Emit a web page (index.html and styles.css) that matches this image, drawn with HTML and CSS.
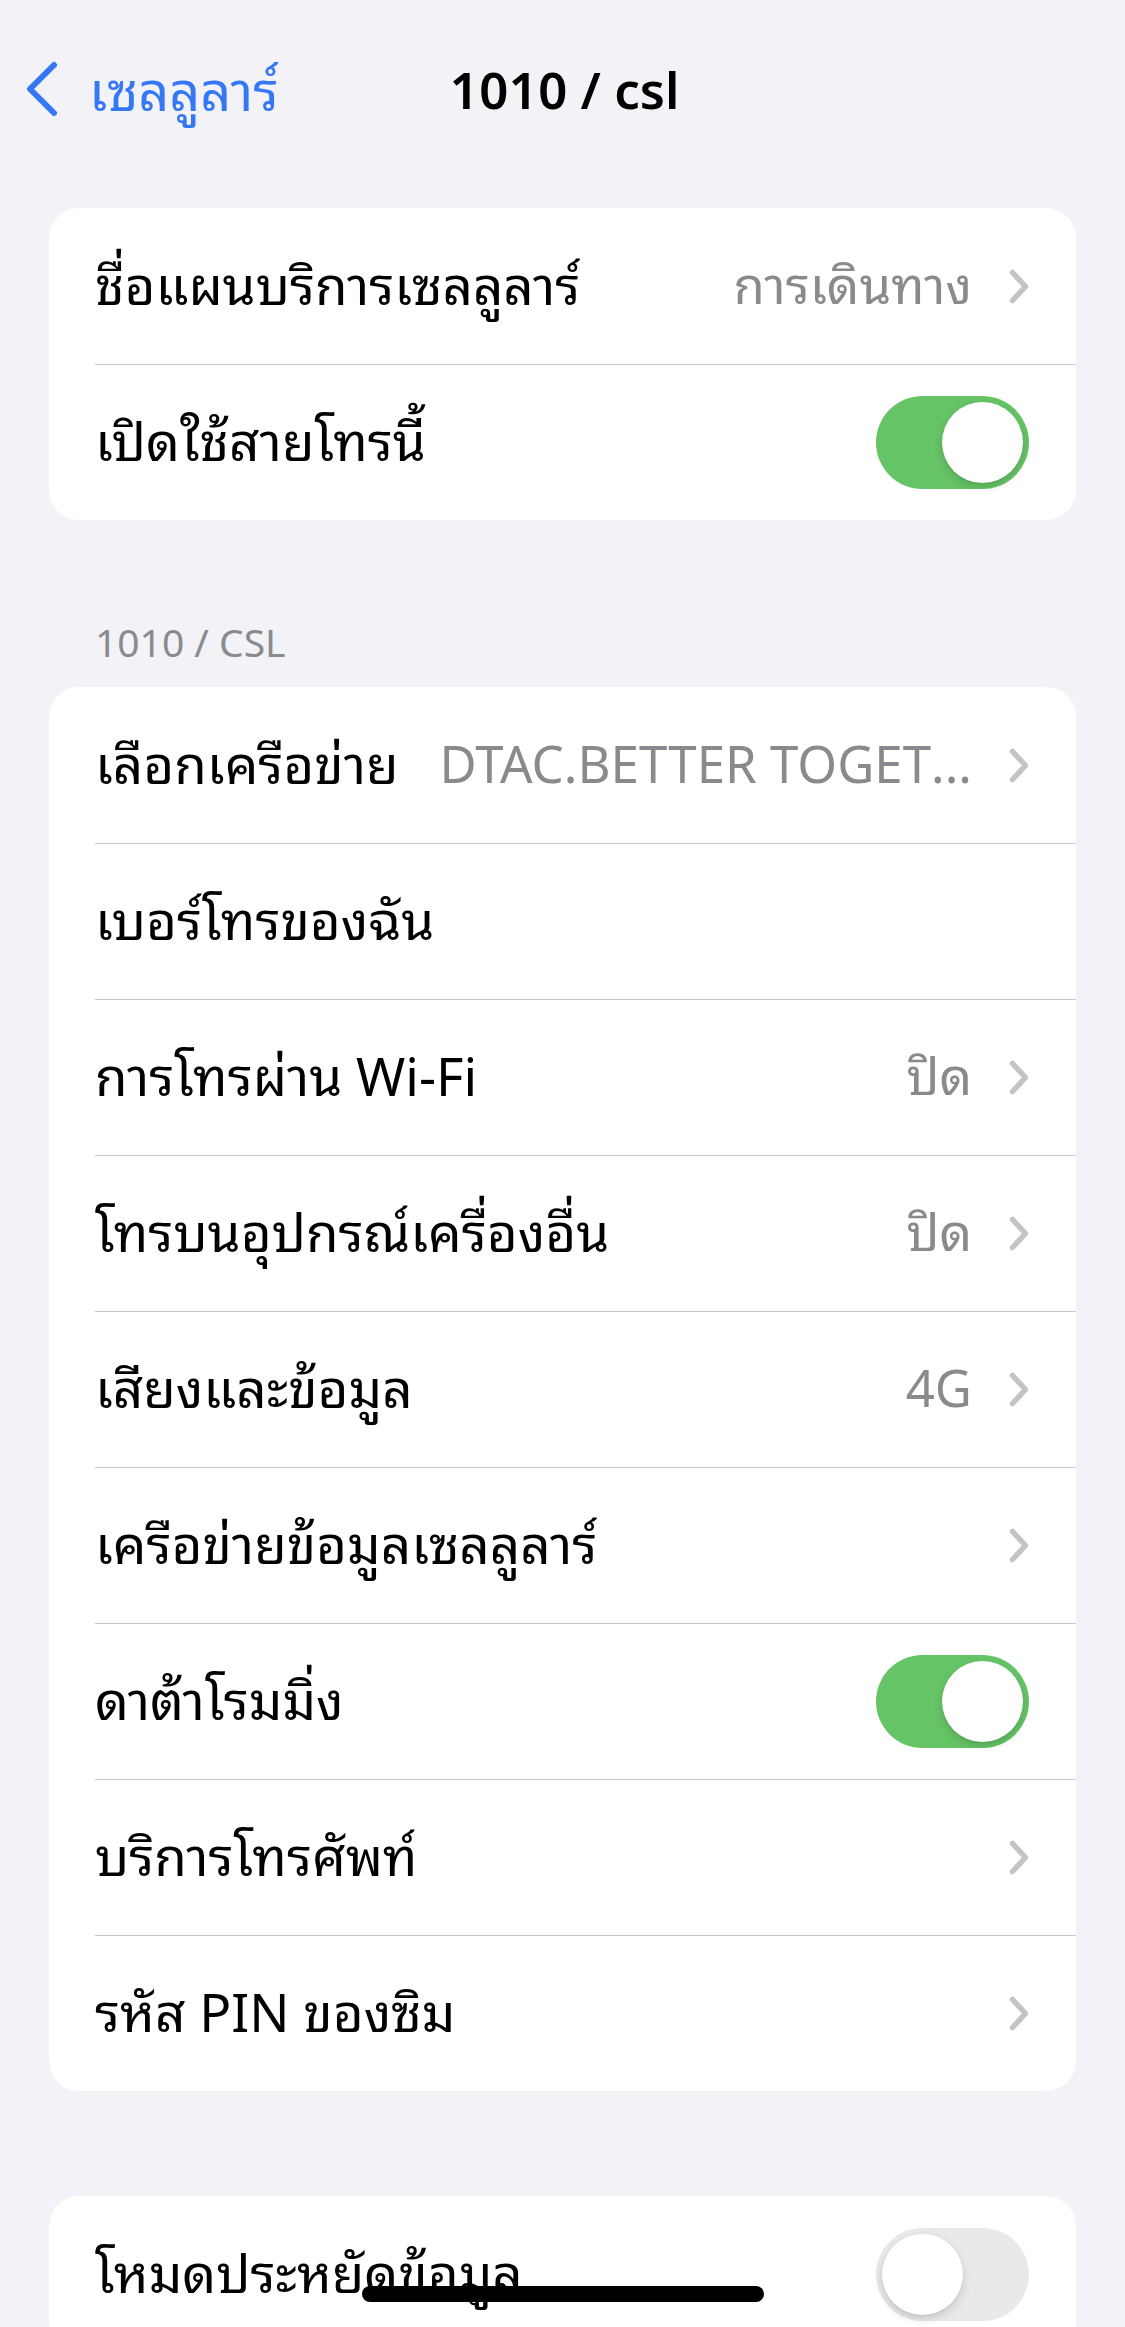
FILE: index.html
```html
<!DOCTYPE html>
<html lang="th">
<head>
    <meta charset="UTF-8">
    <title>1010 / csl</title>
    <link rel="stylesheet" href="styles.css">
</head>
<body>
<div class="screen">
    <div class="nav">
        <a class="back" href="#">
            <svg class="back-icon" viewBox="0 0 34 56" width="34" height="56">
                <path d="M29 4 L5 28 L29 52" fill="none" stroke="#3478f6" stroke-width="6" stroke-linecap="round" stroke-linejoin="round"/>
            </svg>
            <span>เซลลูลาร์</span>
        </a>
        <div class="title">1010 / csl</div>
    </div>

    <div class="group first">
        <div class="row">
            <span class="label">ชื่อแผนบริการเซลลูลาร์</span>
            <span class="value">การเดินทาง</span>
            <span class="chevron"></span>
        </div>
        <div class="row">
            <span class="label">เปิดใช้สายโทรนี้</span>
            <span class="switch on"><span class="knob"></span></span>
        </div>
    </div>

    <div class="section-title">1010 / CSL</div>
    <div class="group">
        <div class="row">
            <span class="label">เลือกเครือข่าย</span>
            <span class="value">DTAC.BETTER TOGET...</span>
            <span class="chevron"></span>
        </div>
        <div class="row">
            <span class="label">เบอร์โทรของฉัน</span>
        </div>
        <div class="row">
            <span class="label">การโทรผ่าน Wi-Fi</span>
            <span class="value">ปิด</span>
            <span class="chevron"></span>
        </div>
        <div class="row">
            <span class="label">โทรบนอุปกรณ์เครื่องอื่น</span>
            <span class="value">ปิด</span>
            <span class="chevron"></span>
        </div>
        <div class="row">
            <span class="label">เสียงและข้อมูล</span>
            <span class="value">4G</span>
            <span class="chevron"></span>
        </div>
        <div class="row">
            <span class="label">เครือข่ายข้อมูลเซลลูลาร์</span>
            <span class="value"></span>
            <span class="chevron"></span>
        </div>
        <div class="row">
            <span class="label">ดาต้าโรมมิ่ง</span>
            <span class="switch on"><span class="knob"></span></span>
        </div>
        <div class="row">
            <span class="label">บริการโทรศัพท์</span>
            <span class="value"></span>
            <span class="chevron"></span>
        </div>
        <div class="row">
            <span class="label">รหัส PIN ของซิม</span>
            <span class="value"></span>
            <span class="chevron"></span>
        </div>
    </div>

    <div class="group last">
        <div class="row">
            <span class="label">โหมดประหยัดข้อมูล</span>
            <span class="switch"><span class="knob"></span></span>
        </div>
    </div>

    <div class="home-bar"></div>
</div>
</body>
</html>
```

FILE: styles.css
```css
* {
    margin: 0;
    padding: 0;
    box-sizing: border-box;
}

html, body {
    background-color: #f2f2f7;
}

body {
    font-family: "Noto Sans Thai Looped", "Loma", "Garuda", "Noto Sans Thai", "Inter", "Noto Sans", "DejaVu Sans", sans-serif;
    color: #000;
}

.screen {
    position: relative;
    width: 1125px;
    height: 2327px;
    overflow: hidden;
}

/* navigation bar */
.nav {
    position: relative;
    height: 132px;
    margin-top: 23px;
    display: flex;
    align-items: center;
    justify-content: center;
}

.back {
    position: absolute;
    left: 25px;
    top: 0;
    bottom: 0;
    display: flex;
    align-items: center;
    gap: 30px;
    color: #3478f6;
    text-decoration: none;
    font-size: 54px;
    line-height: 1;
    padding-bottom: 4px;
}

.back-icon {
    display: block;
    margin-top: 4px;
}

.title {
    font-size: 51px;
    font-weight: 600;
    line-height: 1;
    margin: 0 0 6px 4px;
}

/* grouped lists */
.group {
    margin: 0 49px;
    background-color: #fff;
    border-radius: 30px;
    overflow: hidden;
}

.group.first {
    margin-top: 53px;
}

.group.last {
    margin-top: 105px;
}

.section-title {
    margin: 96px 95px 23px;
    height: 48px;
    line-height: 48px;
    font-size: 39px;
    color: #8a8a8e;
}

.row {
    position: relative;
    height: 156px;
    display: flex;
    align-items: center;
    padding: 0 47px 10px 46px;
    font-size: 53px;
}

.row + .row::before {
    content: "";
    position: absolute;
    top: 0;
    left: 46px;
    right: 0;
    height: 1px;
    background-color: #c8c7cc;
}

.label {
    flex: 0 0 auto;
    white-space: nowrap;
}

.value {
    flex: 1 1 auto;
    min-width: 0;
    text-align: right;
    color: #8a8a8e;
    font-size: 51px;
    white-space: nowrap;
    overflow: hidden;
    text-overflow: ellipsis;
    padding-left: 16px;
}

.chevron {
    flex: 0 0 auto;
    width: 20px;
    height: 35px;
    margin: 10px 0 0 37px;
    background: no-repeat center / 20px 35px url("data:image/svg+xml,%3Csvg xmlns='http://www.w3.org/2000/svg' viewBox='0 0 20 35'%3E%3Cpath d='M3.5 3.5 L16.5 17.5 L3.5 31.5' fill='none' stroke='%23c4c4c7' stroke-width='5.5' stroke-linecap='round' stroke-linejoin='round'/%3E%3C/svg%3E");
}

/* switches */
.switch {
    margin: 10px 0 0 auto;
    position: relative;
    width: 153px;
    height: 93px;
    border-radius: 47px;
    background-color: #e9e9eb;
}

.switch.on {
    background-color: #65c466;
}

.knob {
    position: absolute;
    top: 6px;
    left: 6px;
    width: 81px;
    height: 81px;
    border-radius: 50%;
    background-color: #fff;
    box-shadow: 0 4px 10px rgba(0, 0, 0, 0.15), 0 1px 2px rgba(0, 0, 0, 0.06);
}

.switch.on .knob {
    left: 66px;
}

/* home indicator */
.home-bar {
    position: absolute;
    left: 362px;
    bottom: 25px;
    width: 402px;
    height: 16px;
    border-radius: 8px;
    background-color: #000;
}
```
